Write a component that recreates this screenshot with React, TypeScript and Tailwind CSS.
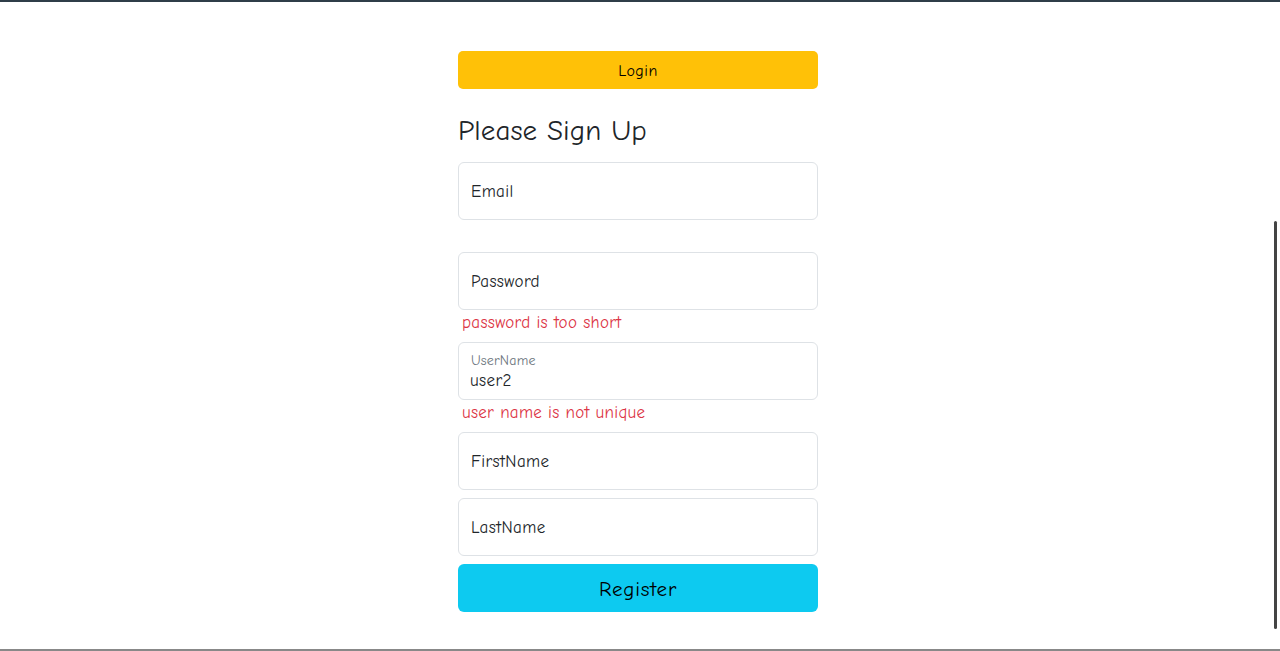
import { useState } from "react";

const font = "font-['Comic_Sans_MS','Comic_Neue','Noto_Sans',sans-serif]";

function Field({
  label,
  value,
  error,
  showErrorRow = true,
}: {
  label: string;
  value?: string;
  error?: string;
  showErrorRow?: boolean;
}) {
  const [v, setV] = useState(value ?? "");
  const filled = v.length > 0;

  return (
    <div className="flex flex-col">
      <label className="relative block h-[58px] rounded-md border border-[#dee2e6] bg-white">
        <span
          className={
            filled
              ? "absolute left-[12px] top-[11px] text-[14px] leading-none tracking-[0.2px] text-[#6c757d]"
              : "absolute left-[12px] top-[19px] text-[17px] leading-5 tracking-[0.4px] text-[#212529]"
          }
        >
          {label}
        </span>
        <input
          value={v}
          onChange={(e) => setV(e.target.value)}
          className={`absolute inset-x-0 bottom-0 h-[58px] w-full bg-transparent px-[11px] pt-[26px] pb-[6px] text-[17px] tracking-[0.4px] text-[#212529] outline-none ${font}`}
        />
      </label>
      {showErrorRow && (
        <div className="h-6 pl-1 pt-px text-[17px] leading-6 tracking-[0.3px] text-[#dc3545]">{error}</div>
      )}
    </div>
  );
}

export default function App() {
  return (
    <div className={`relative min-h-[651px] border-t-2 border-[#2f3e48] bg-white ${font}`}>
      <div className="flex justify-center pr-1 pt-[49px]">
        <div className="flex w-[360px] flex-col">
          <button className="h-[38px] rounded-[5px] bg-[#ffc107] pt-[2px] text-base tracking-[0.5px] text-black">
            Login
          </button>

          <h3 className="mt-[25px] mb-[14px] text-[29px] leading-[34px] tracking-[0.1px] text-[#212529]">
            Please Sign Up
          </h3>

          <div className="flex flex-col gap-2">
            <Field label="Email" />
            <Field label="Password" error="password is too short" />
            <Field label="UserName" value="user2" error="user name is not unique" />
            <Field label="FirstName" showErrorRow={false} />
            <Field label="LastName" showErrorRow={false} />
            <button className="h-12 rounded-md bg-[#0dcaf0] pt-[3px] text-[21px] tracking-[0.8px] text-black">
              Register
            </button>
          </div>
        </div>
      </div>

      {/* scrollbar thumb + bottom edge from the original capture */}
      <div className="absolute right-[3px] top-[219px] h-[408px] w-[3px] rounded-full bg-[#444]" />
      <div className="absolute inset-x-0 bottom-0 h-[2px] bg-[#888]" />
    </div>
  );
}
